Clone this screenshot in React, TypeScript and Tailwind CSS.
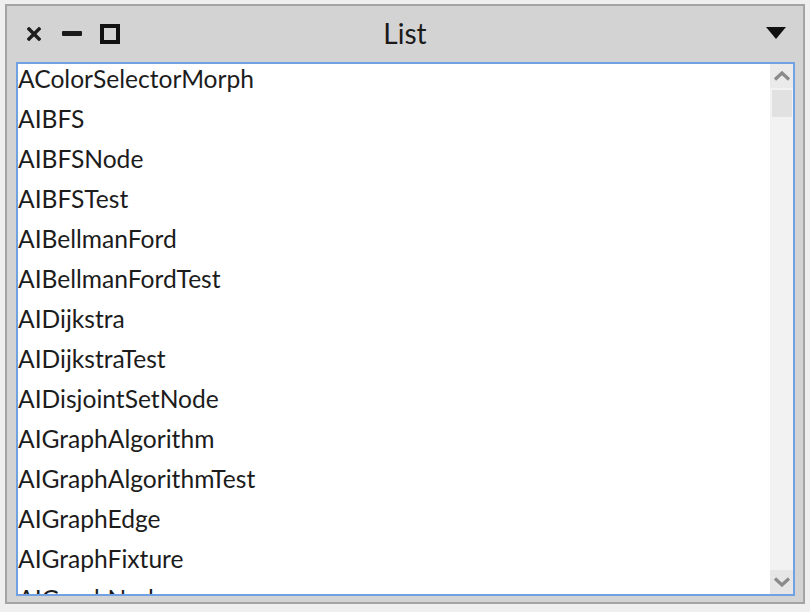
const items = [
  'AColorSelectorMorph',
  'AIBFS',
  'AIBFSNode',
  'AIBFSTest',
  'AIBellmanFord',
  'AIBellmanFordTest',
  'AIDijkstra',
  'AIDijkstraTest',
  'AIDisjointSetNode',
  'AIGraphAlgorithm',
  'AIGraphAlgorithmTest',
  'AIGraphEdge',
  'AIGraphFixture',
  'AIGraphNode',
];

export default function App() {
  return (
    <div
      className="w-[810px] h-[612px] bg-[#efefef] pt-[4px] pl-[5px]"
      style={{ fontFamily: 'Lato, "Noto Sans", sans-serif' }}
    >
      <div className="w-[800px] h-[600px] border-2 border-[#a4a4a4] bg-[#d3d3d3] flex flex-col">
        {/* Title bar */}
        <div className="h-[56px] relative flex items-center shrink-0">
          <div className="absolute left-[20px] top-[21px]">
            <svg width="14" height="14" viewBox="0 0 14 14">
              <path d="M2 2 L12 12 M12 2 L2 12" stroke="#1e1e1e" strokeWidth="3.4" strokeLinecap="square" />
            </svg>
          </div>
          <div className="absolute left-[55px] top-[25px] w-[20px] h-[5px] bg-[#1a1a1a] rounded-[1px]" />
          <div className="absolute left-[93px] top-[18px] w-[20px] h-[20px] border-[4px] border-[#111]" />
          <div className="flex-1 text-center text-[28px] leading-none text-[#1a1a1a] -mt-[2px]">List</div>
          <div className="absolute right-[17px] top-[21px]">
            <svg width="20" height="12" viewBox="0 0 20 12">
              <polygon points="0,0 20,0 10,12" fill="#111" />
            </svg>
          </div>
        </div>

        {/* List box */}
        <div className="flex-1 ml-[9px] mr-[8px] mb-[6px] border-2 border-[#72a1e3] bg-white flex overflow-hidden">
          <div className="flex-1 overflow-hidden pt-[1px]">
            {items.map((name) => (
              <div key={name} className="h-[40px] text-[24.6px] leading-[28px] text-[#1c1c1c] whitespace-nowrap">
                {name}
              </div>
            ))}
          </div>
          <div className="w-[23px] bg-[#f2f2f2] flex flex-col">
            <div className="h-[24px] bg-[#eaeaea] flex items-center justify-center">
              <svg width="18" height="10" viewBox="0 0 18 10">
                <polyline points="2,8.5 9,2 16,8.5" fill="none" stroke="#8a8a8a" strokeWidth="3.2" />
              </svg>
            </div>
            <div className="mt-[2px] ml-[2px] mr-[1px] h-[27px] bg-[#e1e1e1]" />
            <div className="flex-1" />
            <div className="h-[24px] bg-[#e6e6e6] flex items-center justify-center">
              <svg width="18" height="10" viewBox="0 0 18 10">
                <polyline points="2,1.5 9,8 16,1.5" fill="none" stroke="#8a8a8a" strokeWidth="3.2" />
              </svg>
            </div>
          </div>
        </div>
      </div>
    </div>
  );
}
